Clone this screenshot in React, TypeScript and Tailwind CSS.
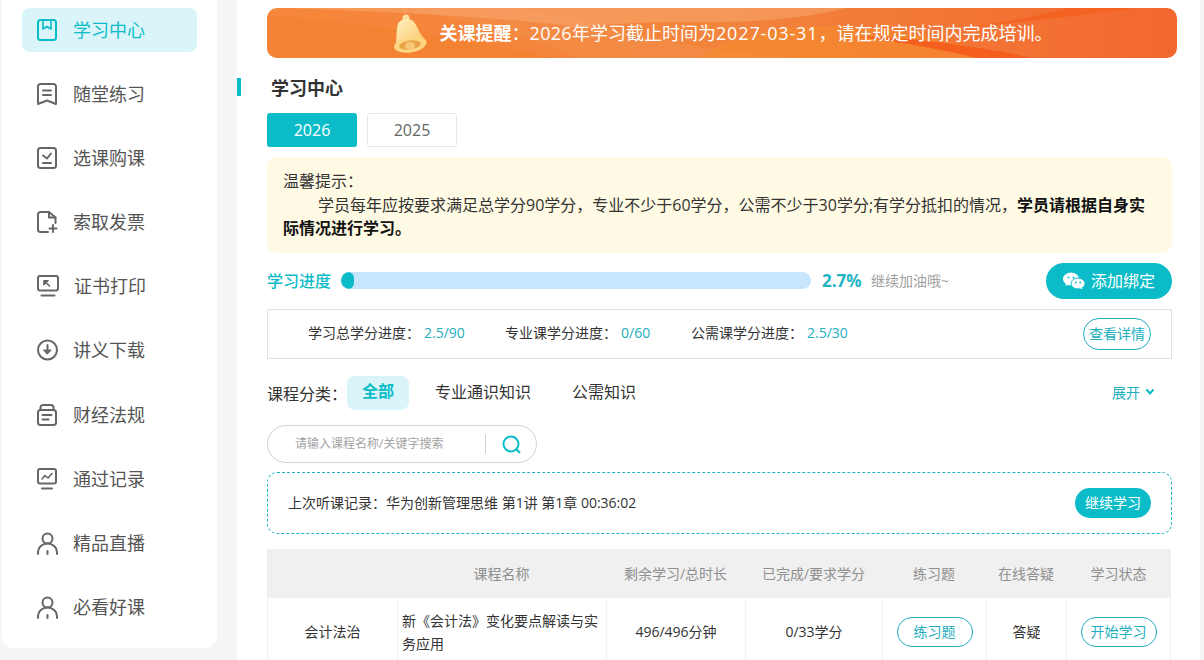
import React from "react";

const G = "#666666";
const T = "#0bbcc8";

function Ic({ children }: { children: React.ReactNode }) {
  return (
    <svg width="24" height="24" viewBox="0 0 24 24" fill="none" strokeWidth="2" strokeLinecap="round" strokeLinejoin="round" className="shrink-0">
      {children}
    </svg>
  );
}

const icons: Record<string, React.ReactNode> = {
  book: (
    <g stroke={T}>
      <rect x="3" y="2" width="18" height="20" rx="2.500" />
      <path d="M8 2.500v8.500l4-2.500 4 2.500V2.500" strokeWidth="1.600" />
    </g>
  ),
  ribbon: (
    <g stroke={G}>
      <path d="M5.500 2h13A2.500 2.500 0 0 1 21 4.500V22l-9-3.500L3 22V4.500A2.500 2.500 0 0 1 5.500 2z" />
      <path d="M8 8.500h8M8 13h8" />
    </g>
  ),
  check: (
    <g stroke={G}>
      <rect x="3" y="2" width="18" height="20" rx="2.500" />
      <path d="M8 9.500l4 3 4-5M8 17h8" />
    </g>
  ),
  doc: (
    <g stroke={G}>
      <path d="M13 22H5.500A2.500 2.500 0 0 1 3 19.500v-15A2.500 2.500 0 0 1 5.500 2H14v5.500h6.500V13" />
      <path d="M14 2l6.500 5.500M18 15v7M14.500 18.500h7" />
    </g>
  ),
  cert: (
    <g stroke={G}>
      <rect x="3" y="2" width="20" height="14.500" rx="2" />
      <path d="M6.500 21.500h13" />
      <path d="M9 6.500h4.500L9 11z" fill={G} strokeWidth="1" />
      <path d="M11 8.500l3.500 3.500" strokeWidth="1.600" />
    </g>
  ),
  down: (
    <g stroke={G}>
      <circle cx="12.500" cy="12" r="9.500" />
      <path d="M12.500 7v6" />
      <path d="M8.800 12h7.400l-3.700 4z" fill={G} strokeWidth="1" />
    </g>
  ),
  law: (
    <g stroke={G}>
      <path d="M5.500 7V4.500A2.500 2.500 0 0 1 8 2h8a2.500 2.500 0 0 1 2.500 2.500V7" />
      <rect x="3" y="7" width="18" height="15" rx="2.500" />
      <path d="M7.500 12h9M7.500 16.500h6" />
    </g>
  ),
  chart: (
    <g stroke={G}>
      <rect x="3" y="2" width="18" height="14.500" rx="2" />
      <path d="M7 21.500h10" />
      <path d="M7 12l3-3.500 3 2.500 4-4.500" strokeWidth="1.600" />
    </g>
  ),
  person: (
    <g stroke={G}>
      <circle cx="12.500" cy="7.500" r="5" />
      <path d="M3 23v-2a9.500 8.500 0 0 1 19 0v2M12.500 20v3" />
    </g>
  ),
};

const menu = [
  ["book", "学习中心", "ml-[14px]"],
  ["ribbon", "随堂练习", "ml-[14px]"],
  ["check", "选课购课", "ml-[14px]"],
  ["doc", "索取发票", "ml-[14px]"],
  ["cert", "证书打印", "ml-[15px]"],
  ["down", "讲义下载", "ml-[14px]"],
  ["law", "财经法规", "ml-[14px]"],
  ["chart", "通过记录", "ml-[14px]"],
  ["person", "精品直播", "ml-[14px]"],
  ["person", "必看好课", "ml-[14px]"],
];

function Sidebar() {
  return (
    <aside className="w-[215px] h-[648px] shrink-0 ml-[2px] bg-white rounded-b-[12px] pt-[8px] px-[20px] flex flex-col gap-[20.1px]">
      {menu.map(([ic, label, ml], i) => (
        <div
          key={label}
          className={
            "h-[44px] w-[175px] shrink-0 rounded-[8px] flex items-center pl-[13px] text-[18px] leading-[24px] " +
            (i === 0 ? "bg-[#d9f5fa] text-[#0bbcc8]" : "text-[#555555]")
          }
        >
          <Ic>{icons[ic]}</Ic>
          <span className={ml}>{label}</span>
        </div>
      ))}
    </aside>
  );
}

function Banner() {
  return (
    <div className="relative h-[50px] w-[910px] rounded-[10px] overflow-hidden bg-gradient-to-r from-[#f6863a] via-[#f2843c] to-[#f3672f] flex items-center justify-center">
      <svg className="absolute inset-0" width="910" height="50" viewBox="0 0 910 50" fill="none">
        <path d="M0 8C100 14 190 30 290 50H0z" fill="#f47f2c" opacity="0.5" />
        <path d="M20 0h560c-30 8-80 14-130 14-60 0-90 0-140 6-30-8-180-16-290-20z" fill="#fbc79a" opacity="0.3" />
        <path d="M140 0c60 12 130 30 170 50h220c-70-6-130-14-170-28C320 12 250 0 250 0z" fill="#f9b27c" opacity="0.14" />
        <path d="M430 50c20-12 60-30 120-32 70-2 130 16 200 32z" fill="#f68c2c" opacity="0.55" />
        <path d="M590 28c60 2 120 10 175 22h-55c-40-10-80-16-120-22z" fill="#f5591a" opacity="0.85" />
        <path d="M700 20c50-6 110-12 170-20h-70c-30 8-60 14-100 20z" fill="#f5601e" opacity="0.8" />
      </svg>
      <svg className="relative mr-[12px] mt-[1px]" width="35" height="40" viewBox="0 0 35 40">
        <defs>
          <linearGradient id="bell" x1="0" y1="0" x2="1" y2="1">
            <stop offset="0" stopColor="#fff0bf" />
            <stop offset="1" stopColor="#fbc25e" />
          </linearGradient>
        </defs>
        <circle cx="14" cy="4" r="3.500" fill="#fcdf9c" />
        <path d="M4 30C5 22 4 16 6 10c2-5 12-7 16-2 4 5 5 12 12 18 1 2 1 3 0 4-8 7-24 8-30 0z" fill="url(#bell)" />
        <ellipse cx="18" cy="31" rx="16" ry="7.500" fill="#fdd682" transform="rotate(-8 18 31)" />
        <ellipse cx="18" cy="31" rx="11" ry="4.500" fill="#e9a44a" transform="rotate(-8 18 31)" />
        <ellipse cx="18" cy="32" rx="5" ry="4" fill="#f7c778" />
      </svg>
      <div className="relative ml-[1px] text-white text-[18px] leading-[26px] whitespace-nowrap">
        <b>关课提醒</b>：<span className="tracking-[0.3px]">2026</span>年学习截止时间为<span className="tracking-[0.85px]">2027-03-31</span>，请在规定时间内完成培训。
      </div>
    </div>
  );
}

function Wechat() {
  return (
    <svg width="22" height="18" viewBox="0 0 22 18" fill="white" className="shrink-0">
      <ellipse cx="8" cy="7" rx="8" ry="6.500" />
      <path d="M3.500 10.500l-1 3.500 4-2z" />
      <ellipse cx="15" cy="11.500" rx="7" ry="5.500" stroke={T} strokeWidth="1" />
      <path d="M18.500 15l1 2.500-3.500-2z" />
      <circle cx="5.500" cy="5.500" r="1" fill={T} />
      <circle cx="10.500" cy="5.500" r="1" fill={T} />
      <circle cx="12.800" cy="10.500" r="0.900" fill={T} />
      <circle cx="17.200" cy="10.500" r="0.900" fill={T} />
    </svg>
  );
}

const headers = ["", "课程名称", "剩余学习/总时长", "已完成/要求学分", "练习题", "在线答疑", "学习状态"];
const grid = "grid grid-cols-[130px_209px_139px_137px_104px_80px_105px]";

function Table() {
  return (
    <div className="w-[904px] text-[14px]">
      <div className={grid + " h-[49px] bg-[#f0f0f0] text-[#8f8f8f]"}>
        {headers.map((h, i) => (
          <div key={i} className="flex items-center justify-center">{h}</div>
        ))}
      </div>
      <div className={grid + " h-[68px] text-[#333333]"}>
        <div className="flex items-center justify-center pb-[2px] border-l border-[#f0f0f0]">会计法治</div>
        <div className="flex items-center border-l border-[#f0f0f0] pl-[4px] pr-[2px] leading-[23px]">新《会计法》变化要点解读与实务应用</div>
        <div className="flex items-center justify-center pb-[2px] border-l border-[#f0f0f0]">496/496分钟</div>
        <div className="flex items-center justify-center pb-[2px] border-l border-[#f0f0f0]">0/33学分</div>
        <div className="flex items-center justify-center border-l border-[#f0f0f0]">
          <span className="w-[76px] h-[30px] pb-[2px] rounded-full border border-[#22aebd] text-[#22aebd] flex items-center justify-center">练习题</span>
        </div>
        <div className="flex items-center justify-center pb-[2px] border-l border-[#f0f0f0]">答疑</div>
        <div className="flex items-center justify-center border-x border-[#f0f0f0]">
          <span className="w-[76px] h-[30px] pb-[2px] rounded-full border border-[#22aebd] text-[#22aebd] flex items-center justify-center">开始学习</span>
        </div>
      </div>
    </div>
  );
}

function Main() {
  return (
    <main className="w-[963px] ml-[20px] h-[660px] overflow-hidden bg-white pt-[8px]">
      <div className="pl-[30px]">
        <Banner />
      </div>

      <div className="mt-[20px] flex items-center h-[18px]">
        <div className="w-[4px] h-[18px] bg-[#0bbcc8]" />
        <h1 className="ml-[30px] mt-[2px] text-[18px] leading-[22px] font-bold text-[#333333]">学习中心</h1>
      </div>

      <div className="pl-[30px] pr-[28px]">
        <div className="mt-[17px] flex gap-[10px] text-[16px]">
          <div className="w-[90px] h-[34px] rounded-[3px] bg-[#0bbcc8] text-white flex items-center justify-center">2026</div>
          <div className="w-[90px] h-[34px] rounded-[3px] border border-[#e6e6e6] text-[#666666] flex items-center justify-center">2025</div>
        </div>

        <div className="mt-[10px] w-[905px] h-[96px] rounded-[10px] bg-[#fffae3] px-[16px] pt-[13px] text-[16px] leading-[23.500px] text-[#333333]">
          <div>温馨提示：</div>
          <div className="indent-[35px] pr-[10px]">
            学员每年应按要求满足总学分90学分，专业不少于60学分，公需不少于30学分;有学分抵扣的情况，<b className="text-[#111111]">学员请根据自身实际情况进行学习。</b>
          </div>
        </div>

        <div className="mt-[10px] h-[36px] flex items-center w-[905px]">
          <span className="text-[16px] font-medium text-[#0bbcc8] w-[74px] -mt-[1px]">学习进度</span>
          <div className="w-[470px] h-[17px] -mt-[1px] rounded-full bg-[#c7e5fd] overflow-hidden">
            <div className="w-[13px] h-[17px] rounded-[6px] bg-[#0bbcc8]" />
          </div>
          <b className="ml-[11px] w-[49px] text-[17px] text-[#22b4c4]">2.7%</b>
          <span className="text-[14px] pb-[2px] text-[#a0a0a0]">继续加油哦~</span>
          <div className="ml-auto w-[126px] h-[36px] rounded-full bg-[#0bbcc8] text-white text-[16px] flex items-center justify-center gap-[6px]">
            <Wechat />
            添加绑定
          </div>
        </div>

        <div className="mt-[10px] w-[905px] h-[50px] border border-[#e2e2e2] flex items-center text-[14px] text-[#333333] pl-[40px] pr-[20px]">
          <span className="w-[116px] pb-[4px]">学习总学分进度：</span>
          <span className="w-[81px] pb-[4px] text-[#22aebd]">2.5/90</span>
          <span className="w-[116px] pb-[4px]">专业课学分进度：</span>
          <span className="w-[70px] pb-[4px] text-[#22aebd]">0/60</span>
          <span className="w-[116px] pb-[4px]">公需课学分进度：</span>
          <span className="pb-[4px] text-[#22aebd]">2.5/30</span>
          <span className="ml-auto w-[68px] h-[32px] pb-[2px] rounded-full border border-[#22aebd] text-[#22aebd] flex items-center justify-center">查看详情</span>
        </div>

        <div className="mt-[17px] w-[905px] h-[34px] flex items-center text-[16px] text-[#333333]">
          <span className="w-[80px] pt-[2px]">课程分类：</span>
          <span className="w-[62px] h-[34px] pb-[4px] rounded-[8px] bg-[#d9f5fa] text-[#0bbcc8] text-[16px] font-bold flex items-center justify-center">全部</span>
          <span className="ml-[26px] -mt-[3px] text-[16px]">专业通识知识</span>
          <span className="ml-[41px] -mt-[3px] text-[16px]">公需知识</span>
          <span className="ml-auto mr-[17px] -mt-[2px] text-[14px] text-[#22aebd] flex items-center gap-[5px]">
            展开
            <svg width="10" height="8" viewBox="0 0 10 8" fill="none" stroke={T} strokeWidth="2"><path d="M1.500 1.500L5 5.500l3.500-4" /></svg>
          </span>
        </div>

        <div className="mt-[15px] w-[270px] h-[38px] rounded-full border border-[#d2d2d2] flex items-center pl-[27px] text-[12px] text-[#a3a3a3]">
          <span className="w-[190px]">请输入课程名称/关键字搜索</span>
          <div className="w-px h-[20px] bg-[#d2d2d2]" />
          <svg className="ml-[16px]" width="19" height="19" viewBox="0 0 19 19" fill="none" stroke={T} strokeWidth="2" strokeLinecap="round">
            <circle cx="9" cy="9" r="7.500" />
            <path d="M14.500 14.500L17.500 17.500" />
          </svg>
        </div>

        <div className="mt-[9px] w-[905px] h-[62px] rounded-[10px] border border-dashed border-[#22b4c4] flex items-center pl-[20px] pr-[20px] text-[14px] text-[#333333]">
          <span className="pb-[2px]">上次听课记录：华为创新管理思维 第1讲 第1章 00:36:02</span>
          <span className="ml-auto w-[76px] h-[30px] pb-[2px] rounded-full bg-[#0bbcc8] text-white flex items-center justify-center">继续学习</span>
        </div>

        <div className="mt-[15px]">
          <Table />
        </div>
      </div>
    </main>
  );
}

export default function App() {
  return (
    <div
      className="w-[1204px] h-[660px] overflow-hidden bg-[#f5f5f5] flex items-start"
      style={{ fontFamily: '"Open Sans", "Noto Sans CJK SC", sans-serif' }}
    >
      <Sidebar />
      <Main />
    </div>
  );
}
